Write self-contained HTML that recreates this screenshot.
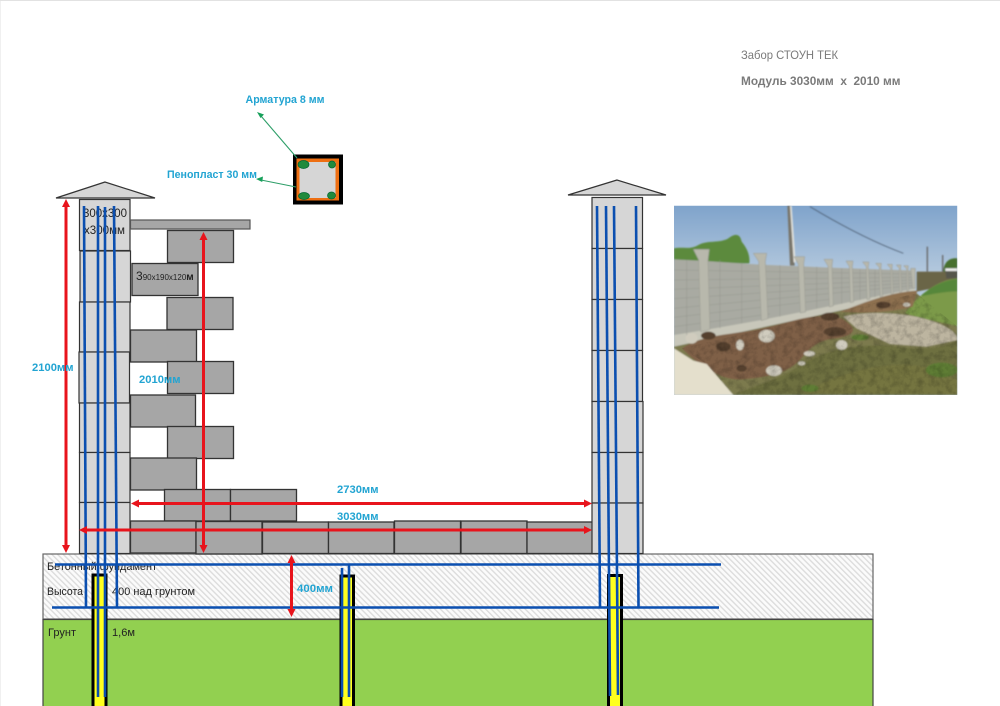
<!DOCTYPE html>
<html><head><meta charset="utf-8"><style>
html,body{margin:0;padding:0;background:#fff;width:1000px;height:706px;overflow:hidden}
svg{display:block}
text{font-family:"Liberation Sans","DejaVu Sans",sans-serif}
.c{fill:#22a4d2;font-weight:bold;font-size:11px}
.k{fill:#222;font-size:11px}
.b{fill:#a6a6a6;stroke:#333;stroke-width:1.3}
.p{fill:#d6d6d6;stroke:#333;stroke-width:1.2}
.bl{stroke:#0b4fb0;stroke-width:2.6;fill:none}
.r{stroke:#e8141c;stroke-width:3;fill:none}
</style></head><body>
<svg width="1000" height="706" viewBox="0 0 1000 706" xmlns="http://www.w3.org/2000/svg">
<defs>
<pattern id="h" width="4" height="4" patternUnits="userSpaceOnUse" patternTransform="rotate(-45)">
<rect width="4" height="4" fill="#fbfbfb"/><rect width="1.4" height="4" fill="#dcdcdc"/>
</pattern>
<clipPath id="ph"><rect x="12" y="17" width="850" height="568"/></clipPath>
<clipPath id="gr"><path d="M190 585L110 492L36 445L540 325L740 280L862 380V585Z"/></clipPath>
<filter id="bl1"><feGaussianBlur stdDeviation="2"/></filter>
<filter id="noise" x="0" y="0" width="100%" height="100%"><feTurbulence type="fractalNoise" baseFrequency=".05" numOctaves="3" seed="4"/><feColorMatrix type="matrix" values="0 0 0 0 0  0 0 0 0 0  0 0 0 0 0  1.800 0 0 0 -.7"/></filter>
<linearGradient id="sky" x1="0" y1="0" x2="0" y2="1"><stop offset="0" stop-color="#7fa3cb"/><stop offset=".35" stop-color="#b3c8dd"/></linearGradient>
</defs>
<rect width="1000" height="706" fill="#fff"/>
<path d="M0 0V706M0 0.5H1000" stroke="#e2e2e2" stroke-width="1"/>

<!-- ground and foundation -->
<rect x="43" y="554" width="830" height="65" fill="url(#h)" stroke="#666" stroke-width="1.2"/>
<rect x="43" y="619.500" width="830" height="90" fill="#92d050" stroke="#444" stroke-width="1.2"/>

<!-- left column -->
<path class="p" d="M105 182L56 198H155Z"/>
<rect class="p" x="79.500" y="199.500" width="50.500" height="51"/>
<rect class="p" x="80" y="251" width="50.500" height="51"/>
<rect class="p" x="79.500" y="302" width="50.500" height="50"/>
<rect class="p" x="79" y="352" width="50.500" height="51"/>
<rect class="p" x="79.500" y="403" width="50.500" height="49.500"/>
<rect class="p" x="79.500" y="452.500" width="50.500" height="50"/>
<rect class="p" x="79.500" y="502.500" width="50.500" height="51"/>

<!-- block wall -->
<rect x="130.500" y="220" width="119.500" height="9" fill="#a6a6a6" stroke="#555" stroke-width="1.2"/>
<rect class="b" x="167.500" y="230.500" width="66" height="32"/>
<rect class="b" x="132" y="263.500" width="66" height="32"/>
<rect class="b" x="167" y="297.500" width="66" height="32"/>
<rect class="b" x="130.500" y="330" width="66" height="32"/>
<rect class="b" x="167.500" y="361.500" width="66" height="32"/>
<rect class="b" x="130.500" y="395" width="65" height="32"/>
<rect class="b" x="167.500" y="426.500" width="66" height="32"/>
<rect class="b" x="130.500" y="458" width="66" height="32"/>
<rect class="b" x="164.500" y="489.500" width="66" height="31.500"/>
<rect class="b" x="230.500" y="489.500" width="66" height="31.500"/>
<rect class="b" x="130.500" y="521" width="65.500" height="32"/>
<rect class="b" x="196" y="521.500" width="66" height="32.500"/>
<rect class="b" x="262.500" y="522" width="66" height="31.500"/>
<rect class="b" x="328.500" y="522" width="65.500" height="31.500"/>
<rect class="b" x="394.500" y="521" width="66" height="32.500"/>
<rect class="b" x="461" y="521" width="66" height="32.500"/>
<rect class="b" x="527" y="522" width="66" height="31.500"/>

<!-- right column -->
<path class="p" d="M617 180L568 195H666Z"/>
<rect class="p" x="592" y="197.500" width="50.500" height="51"/>
<rect class="p" x="592" y="248.500" width="50.500" height="51"/>
<rect class="p" x="592" y="299.500" width="50.500" height="51"/>
<rect class="p" x="592" y="350.500" width="50.500" height="51"/>
<rect class="p" x="592" y="401.500" width="51" height="51"/>
<rect class="p" x="592" y="452.500" width="51" height="50.500"/>
<rect class="p" x="592" y="503" width="51" height="50.500"/>

<!-- piles -->
<g stroke="#000" stroke-width="3" fill="#ffff1e">
<rect x="93" y="575" width="13" height="135"/>
<rect x="341" y="576" width="12.500" height="135"/>
<rect x="608.500" y="575.500" width="13" height="135"/>
</g>

<!-- text under rebar -->
<text class="k" x="47" y="570" textLength="110" lengthAdjust="spacingAndGlyphs">Бетонный фундамент</text>
<text class="k" x="47" y="595" textLength="36" lengthAdjust="spacingAndGlyphs">Высота</text>
<text class="k" x="112" y="595" textLength="83" lengthAdjust="spacingAndGlyphs">400 над грунтом</text>
<text class="k" x="48" y="636" textLength="28" lengthAdjust="spacingAndGlyphs">Грунт</text>
<text class="k" x="112" y="636" textLength="23" lengthAdjust="spacingAndGlyphs">1,6м</text>
<text x="83" y="217" fill="#222" style="font-size:11.5px" textLength="44" lengthAdjust="spacingAndGlyphs">300x300</text>
<text x="84" y="234" fill="#222" style="font-size:11.5px" textLength="41" lengthAdjust="spacingAndGlyphs">x300мм</text>
<text x="136" y="280" fill="#222" style="font-size:12px">3<tspan style="font-size:8px">90x190x120</tspan><tspan style="font-weight:bold;font-size:10px">м</tspan></text>

<!-- rebar -->
<g class="bl">
<path d="M55 564.500H721"/>
<path d="M52 607.500H719"/>
<path d="M84 206L86 607"/>
<path d="M98 206L98 697"/>
<path d="M105 207L105 697"/>
<path d="M114 206L117 607"/>
<path d="M342 568V697"/>
<path d="M349 564V697"/>
<path d="M597 206L600 607"/>
<path d="M606 206L610 696"/>
<path d="M614 206L618 695"/>
<path d="M636 206L638.500 607"/>
</g>

<!-- red dims -->
<g class="r">
<path d="M66 205V547"/>
<path d="M203.500 238V547"/>
<path d="M138 503.500H586"/>
<path d="M86 530H589"/>
<path d="M291.500 561V611"/>
</g>
<g fill="#e8141c">
<path d="M66 199l-4 8h8zM66 553l-4-8h8z"/>
<path d="M203.500 232l-4 8h8zM203.500 553l-4-8h8z"/>
<path d="M131 503.500l8-4v8zM592 503.500l-8-4v8z"/>
<path d="M79 530l8-4v8zM592 530l-8-4v8z"/>
<path d="M291.500 555l-4 8h8zM291.500 617l-4-8h8z"/>
</g>

<!-- section square -->
<rect x="293" y="154.500" width="50" height="50" fill="#000"/>
<rect x="296.500" y="158.500" width="42.500" height="42" fill="#ee6f12"/>
<rect x="299.500" y="162" width="36" height="36" fill="#d6d6d6"/>
<g fill="#1f8a3c" stroke="#063" stroke-width=".7">
<ellipse cx="303.500" cy="164.500" rx="5.500" ry="4"/>
<ellipse cx="332" cy="164.500" rx="3.500" ry="3.500"/>
<ellipse cx="304" cy="196" rx="5.500" ry="3.500"/>
<ellipse cx="331.500" cy="195.500" rx="4" ry="3.500"/>
</g>
<path d="M297 158L261 116" stroke="#2d9e68" stroke-width="1.100" fill="none"/>
<path d="M257 112l7 2.500-3.500 3.500z" fill="#16a05a"/>
<path d="M296 187L261 180" stroke="#2d9e68" stroke-width="1.100" fill="none"/>
<path d="M256 179l7-2.500-.8 5.500z" fill="#16a05a"/>

<!-- labels -->
<text class="c" x="245.500" y="103" textLength="79" lengthAdjust="spacingAndGlyphs">Арматура 8 мм</text>
<text class="c" x="167" y="178" textLength="90" lengthAdjust="spacingAndGlyphs">Пенопласт 30 мм</text>
<text class="c" x="32" y="371" textLength="41.500" lengthAdjust="spacingAndGlyphs">2100мм</text>
<text class="c" x="139" y="383" textLength="41.500" lengthAdjust="spacingAndGlyphs">2010мм</text>
<text class="c" x="337" y="493" textLength="41.500" lengthAdjust="spacingAndGlyphs">2730мм</text>
<text class="c" x="337" y="520" textLength="41.500" lengthAdjust="spacingAndGlyphs">3030мм</text>
<text class="c" x="297" y="592" textLength="36" lengthAdjust="spacingAndGlyphs">400мм</text>
<text x="741" y="59" fill="#7a7a7a" style="font-size:12px" textLength="97" lengthAdjust="spacingAndGlyphs">Забор СТОУН ТЕК</text>
<text x="741" y="85" fill="#7a7a7a" style="font-size:12px;font-weight:bold;white-space:pre" textLength="159.500" lengthAdjust="spacingAndGlyphs">Модуль 3030мм  x  2010 мм</text>

<!-- photo -->
<g transform="translate(670 200) scale(.33333)" clip-path="url(#ph)">
<rect x="12" y="17" width="850" height="568" fill="url(#sky)"/>
<g filter="url(#bl1)">
<!-- trees -->
<path d="M12 145C40 140 60 150 85 135C110 120 150 130 175 115C195 100 210 100 215 125C235 150 240 170 238 190H12Z" fill="#5c8a3e"/>
<path d="M820 212C822 185 840 172 862 175V225H820Z" fill="#47702f"/>
<!-- pole and wires -->
<path d="M352 17h9l13 180h-14z" fill="#78746a"/>
<path d="M360 17h5l12 170h-6z" fill="#e2e2dc"/>
<path d="M420 20C520 80 620 130 700 160" stroke="#3f4e60" stroke-width="2" fill="none"/>
<path d="M772 140v75M818 165v50" stroke="#666" stroke-width="4"/>
<path d="M740 215H862V250L740 275Z" fill="#6b6546"/>
<!-- base strip below wall -->
<path d="M12 405L735 265V285L540 325L12 440Z" fill="#c8c7ba"/>
<!-- wall -->
<path d="M12 178L90 182L270 194L480 203L735 212V265L545 305L400 335L275 360L105 390L12 405Z" fill="#a9aaa2"/>
<g stroke="#92938b" stroke-width="1.300" fill="none">
<path d="M12 210L735 222M12 240L735 232M12 268L735 240M12 296L735 248M12 325L735 256M12 352L480 298M12 380L300 342"/>
<path d="M50 180V405M150 180V385M215 190V370M330 195V350M440 200V325M515 205V312M570 208V300M615 210V292"/>
</g>
<!-- posts -->
<g fill="#b8b8ac" stroke="#989890" stroke-width="1.500">
<path d="M70 148h48l-4 32 6 208-28 8-6-216z"/>
<path d="M250 160h40l-4 24 8 172-20 6-8-178z"/>
<path d="M372 170h32l-3 22 6 144-16 3-6-147z"/>
<path d="M462 178h26l-2 20 4 120-12 3-4-123z"/>
<path d="M528 183h21l-2 16 4 107-10 2-3-108z"/>
<path d="M578 186h19l-2 14 5 97-9 2-2-99z"/>
<path d="M617 190h17l-1 12 5 90-7 1-3-91z"/>
<path d="M652 193h15l-1 12 4 80-6 1-2-81z"/>
<path d="M679 195h14l-1 10 3 76-6 1-1-77z"/>
<path d="M701 197h14l-1 10 2 70-5 1-1-71z"/>
<path d="M722 205h14v60h-8z"/>
</g>
<!-- ground -->
<path d="M12 440L540 325L740 280L862 380V585H12Z" fill="#7c7a4e"/>
<!-- right grass -->
<path d="M705 340C745 285 800 240 862 235V378C800 365 745 352 705 340Z" fill="#7c9a48"/>
<path d="M755 285C795 252 830 240 862 237V274C825 274 790 282 755 288Z" fill="#56873a"/>
<!-- gravel track -->
<path d="M520 350C590 332 690 338 760 355C815 370 862 392 862 420L770 440L660 432L560 385Z" fill="#bdb5a0"/>
<!-- heaps -->
<path d="M36 445C100 400 200 405 300 380C380 360 450 335 515 355C565 385 560 405 500 415C440 420 420 445 390 480C350 520 300 530 220 538C150 545 80 490 36 445Z" fill="#7f6046"/>
<path d="M510 335C580 310 650 278 742 272L728 320C680 335 590 342 510 335Z" fill="#8d6f50"/>
<!-- meadow -->
<path d="M190 585C240 560 330 540 390 495C470 445 590 425 690 442C780 452 830 440 862 420V585Z" fill="#6e7040"/>
<path d="M12 445L70 482L110 492L190 585H12Z" fill="#e4dfcc"/>
<path d="M400 580C500 520 640 480 760 500L862 540V585Z" fill="#75743f"/>
<!-- rocks -->
<g fill="#d0ccbe">
<ellipse cx="290" cy="408" rx="24" ry="19"/><ellipse cx="65" cy="415" rx="18" ry="16"/>
<ellipse cx="312" cy="512" rx="24" ry="16"/><ellipse cx="515" cy="435" rx="17" ry="15"/>
<ellipse cx="418" cy="461" rx="17" ry="8"/><ellipse cx="210" cy="435" rx="12" ry="16"/>
<ellipse cx="710" cy="314" rx="11" ry="6"/><ellipse cx="395" cy="490" rx="11" ry="6"/>
</g>
<g fill="#54402f">
<ellipse cx="115" cy="407" rx="22" ry="12"/><ellipse cx="215" cy="505" rx="16" ry="10"/>
<ellipse cx="480" cy="350" rx="28" ry="12"/><ellipse cx="495" cy="395" rx="34" ry="14"/>
<ellipse cx="160" cy="440" rx="22" ry="14"/><ellipse cx="640" cy="315" rx="22" ry="10"/>
</g>
<ellipse cx="570" cy="412" rx="26" ry="9" fill="#5e7d35"/>
<ellipse cx="420" cy="565" rx="26" ry="11" fill="#5e7d35"/>
<ellipse cx="815" cy="510" rx="48" ry="22" fill="#5e7d35"/>
<path d="M825 205h37v30h-33z" fill="#56564c"/><path d="M826 205h36v8h-36z" fill="#eee"/>
</g>
<!-- texture on the ground only -->
<g clip-path="url(#gr)"><rect x="12" y="270" width="850" height="315" filter="url(#noise)" opacity=".22"/></g>
</g>
</svg>
</body></html>
